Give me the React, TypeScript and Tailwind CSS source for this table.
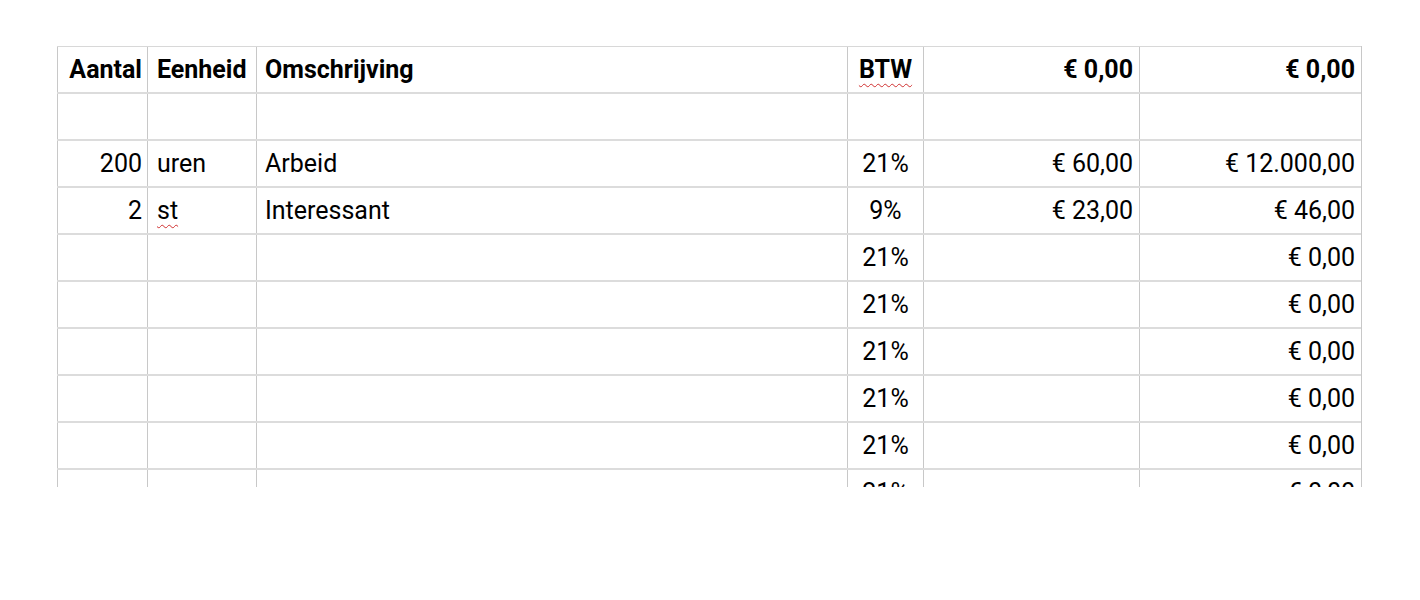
const cols = "grid grid-cols-[90px_109px_591px_76px_216px_222px]";

type Row = {
  aantal?: string;
  eenheid?: string;
  oms?: string;
  btw?: string;
  prijs?: string;
  totaal?: string;
  spellEenheid?: boolean;
};

const rows: Row[] = [
  {},
  { aantal: "200", eenheid: "uren", oms: "Arbeid", btw: "21%", prijs: "€ 60,00", totaal: "€ 12.000,00" },
  { aantal: "2", eenheid: "st", oms: "Interessant", btw: "9%", prijs: "€ 23,00", totaal: "€ 46,00", spellEenheid: true },
  { btw: "21%", totaal: "€ 0,00" },
  { btw: "21%", totaal: "€ 0,00" },
  { btw: "21%", totaal: "€ 0,00" },
  { btw: "21%", totaal: "€ 0,00" },
  { btw: "21%", totaal: "€ 0,00" },
  { btw: "21%", totaal: "€ 0,00" },
];

const cell = "h-[45px] flex items-center border-l border-[#c8c8c8] whitespace-nowrap";

export default function App() {
  return (
    <div className="w-[1420px] h-[600px] bg-white pt-[46px] pl-[57px] font-['Roboto','Liberation_Sans',sans-serif] text-[25px] text-black">
      <div className="w-[1305px] h-[441px] overflow-hidden border-r border-[#c8c8c8]">
        {/* header */}
        <div className={`${cols} border-t border-[#d8d8d8] font-bold`}>
          <div className={`${cell} justify-end pr-[5px]`}>Aantal</div>
          <div className={`${cell} pl-[9px]`}>Eenheid</div>
          <div className={`${cell} pl-[8px]`}>Omschrijving</div>
          <div className={`${cell} justify-center`}>
            <span className="underline decoration-wavy decoration-[#d03030] decoration-1 underline-offset-[5px]">BTW</span>
          </div>
          <div className={`${cell} justify-end pr-[6px]`}>€ 0,00</div>
          <div className={`${cell} justify-end pr-[6px]`}>€ 0,00</div>
        </div>

        {rows.map((r, i) => (
          <div key={i} className={`${cols} border-t-2 border-[#dcdcdc]`}>
            <div className={`${cell} justify-end pr-[5px]`}>{r.aantal}</div>
            <div className={`${cell} pl-[9px]`}>
              {r.spellEenheid ? (
                <span className="underline decoration-wavy decoration-[#d03030] decoration-1 underline-offset-[5px]">{r.eenheid}</span>
              ) : (
                r.eenheid
              )}
            </div>
            <div className={`${cell} pl-[8px]`}>{r.oms}</div>
            <div className={`${cell} justify-center`}>{r.btw}</div>
            <div className={`${cell} justify-end pr-[6px]`}>{r.prijs}</div>
            <div className={`${cell} justify-end pr-[6px]`}>{r.totaal}</div>
          </div>
        ))}
      </div>
    </div>
  );
}
